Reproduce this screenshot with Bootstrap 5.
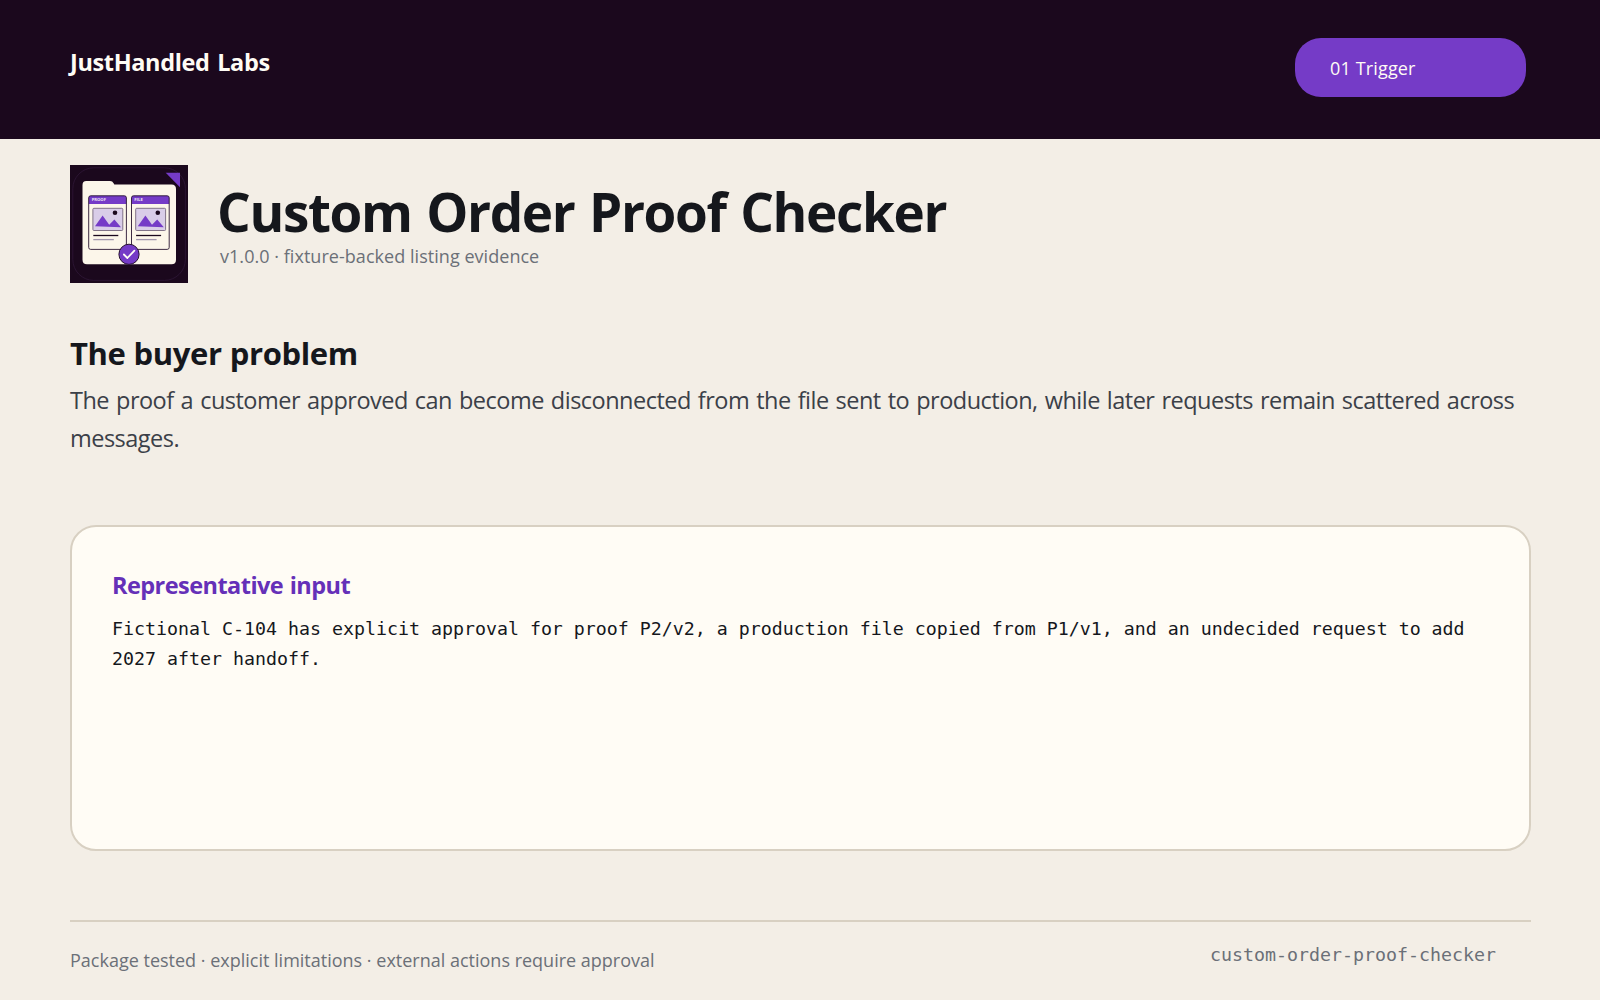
<!doctype html>
<html lang="en">
<head>
<meta charset="utf-8">
<meta name="viewport" content="width=device-width, initial-scale=1">
<title>Custom Order Proof Checker</title>
<link href="https://cdn.jsdelivr.net/npm/bootstrap@5.3.0/dist/css/bootstrap.min.css" rel="stylesheet">
<style>
  body { background: #f3eee6; color: #15171c; font-family: "Open Sans", "Noto Sans", sans-serif; }
  .topbar { height: 139px; background: #1b081d; padding: 38px 74px 0 70px; }
  .brand { margin-top: 8px; font-size: 23.5px; line-height: 32px; letter-spacing: -.37px; word-spacing: 2px; color: #fffcf5; }
  .step-pill { width: 231px; height: 59px; padding-left: 35px; border-radius: 26px; background: #753bc7; color: #fffcf5; font-size: 18px; line-height: 60px; letter-spacing: .15px; }
  .page { padding: 26px 69px 0 70px; }
  .hero { gap: 29px; }
  .hero-text { padding-top: 17px; }
  .hero-title { font-size: 53px; line-height: 60px; letter-spacing: -1.35px; word-spacing: 2px; }
  .version { margin: 0 0 0 3px; font-size: 18px; line-height: 28px; letter-spacing: .04px; }
  .muted { color: #6b7078; }
  .problem { margin-top: 50px; }
  .problem h2 { font-size: 31px; line-height: 40px; letter-spacing: -.4px; word-spacing: .5px; }
  .problem p { margin-top: 8px; font-size: 23.5px; line-height: 38px; letter-spacing: -.51px; word-spacing: 1.4px; color: #3b4048; }
  .sample { height: 326px; margin-top: 68px; padding: 42px 40px; background: #fffcf5; border: 2px solid #d8d0c2; border-radius: 26px; }
  .sample h3 { font-size: 23.5px; line-height: 32px; letter-spacing: -.55px; word-spacing: 1px; color: #6530b8; }
  .code-text { font-family: "DejaVu Sans Mono", monospace; font-size: 18.27px; }
  .sample p { margin-top: 13px; line-height: 30px; }
  .page-foot { margin-top: 69px; border-top: 2px solid #d8d0c2; padding: 19px 35px 0 0; font-size: 18px; line-height: 28px; }
  .foot-note { margin-top: 5px; }
</style>
<script src="https://cdn.jsdelivr.net/npm/bootstrap@5.3.0/dist/js/bootstrap.bundle.min.js"></script>
</head>
<body>
<header class="topbar d-flex justify-content-between align-items-start">
  <div class="brand fw-bold">JustHandled Labs</div>
  <div class="step-pill">01 Trigger</div>
</header>
<main class="page">
  <section class="hero d-flex align-items-start">
    <svg class="flex-shrink-0" width="118" height="118" viewBox="0 0 118 118" role="img" aria-label="Proof checker">
      <rect width="118" height="118" fill="#1b081d"/>
      <rect x="2.8" y="2.8" width="112.6" height="112.6" rx="21" fill="none" stroke="#2c1534" stroke-width=".9"/>
      <path d="M95.7 7.8H110V22.3Z" fill="#753bc7"/>
      <path d="M16.3 16H40Q42.500 16 43.600 18.200L44.300 19.500H101.500Q106 19.500 106 24V94.800Q106 99.300 101.500 99.300H17Q12.500 99.300 12.500 94.800V20Q12.500 16 16.300 16Z" fill="#fcf6ea"/>
      <g id="panel">
        <rect x="18.700" y="30.800" width="37.700" height="53.600" rx="2" fill="#fcf6ea"/>
        <path d="M18.700 39V32.800Q18.700 30.800 20.700 30.800H54.400Q56.400 30.800 56.400 32.800V39Z" fill="#753bc7"/>
        <rect x="18.700" y="30.800" width="37.700" height="53.600" rx="2" fill="none" stroke="#281431" stroke-width=".9"/>
        <rect x="22.900" y="43.300" width="29.900" height="22.200" rx="1" fill="#d9cde8" stroke="#75677d" stroke-width=".9"/>
        <path d="M25 61.200L32.600 50.500L39.200 59.700L44.400 54.500L51 62.200Z" fill="#753bc7"/>
        <circle cx="45" cy="47.800" r="2.300" fill="#1b081d"/>
        <path d="M23.300 70.500H48.300" stroke="#1b081d" stroke-width="1.300"/>
        <path d="M23.300 74.600H43.800" stroke="#a397ae" stroke-width="1.300"/>
      </g>
      <use href="#panel" x="42.800"/>
      <g font-family="Open Sans, sans-serif" font-size="4.100" font-weight="700" fill="#f0e8f6">
        <text x="21.700" y="36.300" textLength="14.300" lengthAdjust="spacingAndGlyphs">PROOF</text>
        <text x="64.200" y="36.300" textLength="8.600" lengthAdjust="spacingAndGlyphs">FILE</text>
      </g>
      <circle cx="59" cy="89.300" r="10.100" fill="#753bc7" stroke="#281431" stroke-width="1"/>
      <path d="M53.900 89.500L57.400 93L64.400 85.600" fill="none" stroke="#fffcf5" stroke-width="1.800" stroke-linecap="round" stroke-linejoin="round"/>
    </svg>
    <div class="hero-text">
      <h1 class="hero-title fw-bold m-0">Custom Order Proof Checker</h1>
      <p class="version muted">v1.0.0 · fixture-backed listing evidence</p>
    </div>
  </section>
  <section class="problem">
    <h2 class="fw-bold m-0">The buyer problem</h2>
    <p class="mb-0">The proof a customer approved can become disconnected from the file sent to production, while later requests remain scattered across messages.</p>
  </section>
  <section class="sample">
    <h3 class="fw-bold m-0">Representative input</h3>
    <p class="code-text mb-0">Fictional C-104 has explicit approval for proof P2/v2, a production file copied from P1/v1, and an undecided request to add 2027 after handoff.</p>
  </section>
  <footer class="page-foot muted d-flex justify-content-between align-items-start">
    <div class="foot-note">Package tested · explicit limitations · external actions require approval</div>
    <div class="code-text">custom-order-proof-checker</div>
  </footer>
</main>
</body>
</html>
